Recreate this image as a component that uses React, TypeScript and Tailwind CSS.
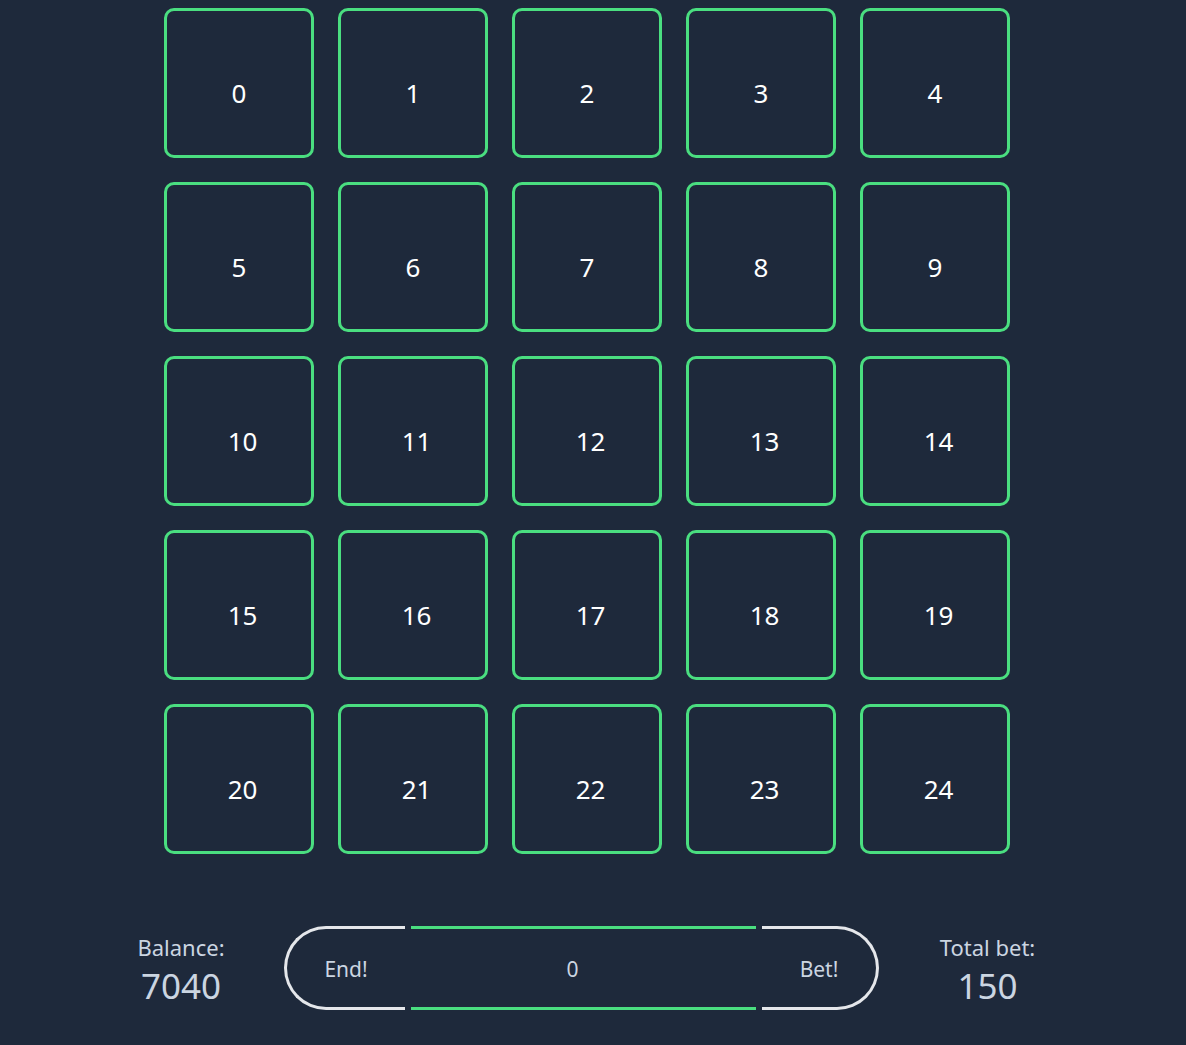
import React from "react";

const font = { fontFamily: '"Noto Sans", "Open Sans", sans-serif' };

export default function App() {
  const nums = Array.from({ length: 25 }, (_, i) => i);
  return (
    <div className="min-h-[1045px] w-full bg-[#1e293b] text-white" style={font}>
      <div className="flex justify-center pr-[12px] pt-2">
        <div className="grid grid-cols-5 gap-[24px]">
          {nums.map((n) => (
            <div
              key={n}
              className={
                "flex h-[150px] w-[150px] items-center justify-center rounded-[10px] border-[3px] border-[#4ade80] pt-[21px] text-[26px] text-white " +
                (n >= 10 ? "pl-[7px]" : "")
              }
            >
              {n}
            </div>
          ))}
        </div>
      </div>
      <div className="mt-[72px] flex items-center justify-center gap-[60px] pr-[12px]">
        <div className="flex w-[86px] flex-col items-center pt-[5px] text-[#cbd5e1]">
          <div className="whitespace-nowrap text-[22px] leading-[26px]">Balance:</div>
          <div className="mt-[4px] text-[35px] leading-[44px]">7040</div>
        </div>
        <div className="flex h-[84px] items-stretch gap-[6px]">
          <div className="flex w-[121px] items-center justify-center rounded-l-full border-y-[3px] border-l-[3px] border-[#e5e7eb] pt-[3px] text-[21px] text-[#cbd5e1]">
            End!
          </div>
          <div className="flex w-[345px] items-center justify-center border-y-[3px] border-[#4ade80] pr-[22px] pt-[3px] text-[21px] text-[#cbd5e1]">
            0
          </div>
          <div className="flex w-[117px] items-center justify-center rounded-r-full border-y-[3px] border-r-[3px] border-[#e5e7eb] pt-[3px] text-[21px] text-[#cbd5e1]">
            Bet!
          </div>
        </div>
        <div className="flex w-[97px] flex-col items-center pt-[5px] text-[#cbd5e1]">
          <div className="whitespace-nowrap text-[22px] leading-[26px]">Total bet:</div>
          <div className="mt-[4px] text-[35px] leading-[44px]">150</div>
        </div>
      </div>
    </div>
  );
}
